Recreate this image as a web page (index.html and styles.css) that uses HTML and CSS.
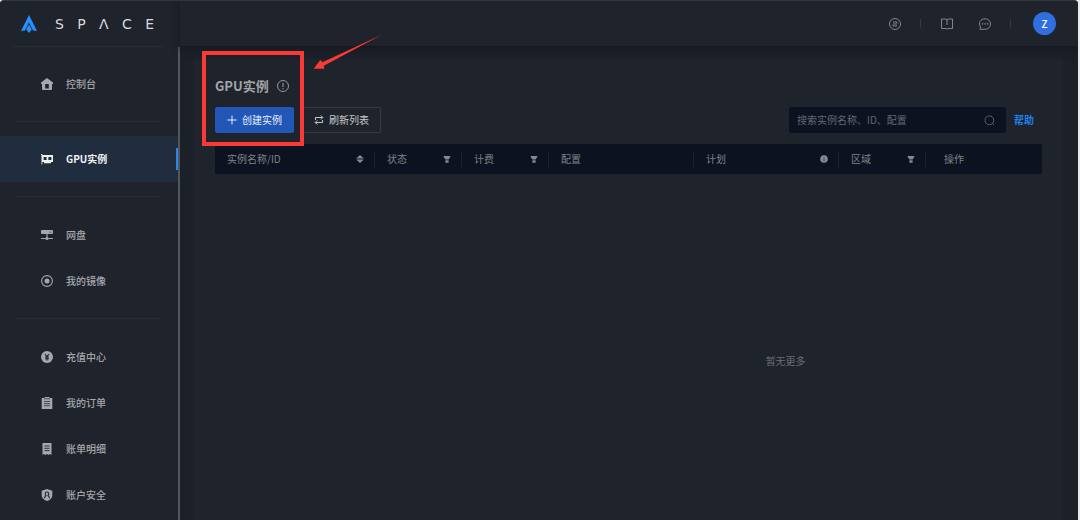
FILE: index.html
```html
<!DOCTYPE html>
<html lang="zh-CN">
<head>
<meta charset="utf-8">
<title>GPU实例</title>
<link rel="stylesheet" href="styles.css">
</head>
<body>
<div class="app">
  <aside class="sidebar">
    <a class="brand" href="#">
      <svg class="brand-mark" viewBox="0 0 16 18"><path fill="#2590ff" d="M8 0 16 16 12 15.500 8 7.500 4 15.500 0 16Z"/><path fill="#2590ff" d="M8 9.500 10.800 14.500 8 18 5.200 14.500Z"/></svg>
      <span class="wordmark"><span>S</span><span>P</span><span>Λ</span><span>C</span><span>E</span></span>
    </a>
    <nav class="nav">
      <div class="nav-group">
        <a class="nav-item" href="#"><svg class="icon" viewBox="0 0 12 12"><path fill="currentColor" fill-rule="evenodd" d="M6 0 12 4.500V6H11V11Q11 12 10 12H2Q1 12 1 11V6H0V4.500ZM4.200 6V10.500H7.800V6Z"/></svg>控制台</a>
      </div>
      <div class="nav-group">
        <a class="nav-item active" href="#" aria-current="page"><svg class="icon" viewBox="0 0 12 12"><path fill="currentColor" fill-rule="evenodd" d="M0 1H1.300V2H12V9H10V10.300H3V9H1.300V11.500H.5V2H0ZM2.600 4V7H5.600V4ZM7.400 4V7H10.400V4Z"/></svg>GPU实例</a>
      </div>
      <div class="nav-group">
        <a class="nav-item" href="#"><svg class="icon" viewBox="0 0 12 12"><rect y="1" width="12" height="4" rx="1" fill="currentColor"/><path stroke="currentColor" stroke-width="1.100" d="M6 5V9M0 9.500H12"/><circle cx="6" cy="9.500" r="1.500" fill="currentColor"/><path stroke="#1f232b" stroke-width=".6" d="M8.500 3.200H10.500"/></svg>网盘</a>
        <a class="nav-item" href="#"><svg class="icon" viewBox="0 0 12 12"><circle cx="6" cy="6" r="5.400" fill="none" stroke="currentColor" stroke-width="1.100"/><circle cx="6" cy="6" r="2.500" fill="currentColor"/></svg>我的镜像</a>
      </div>
      <div class="nav-group">
        <a class="nav-item" href="#"><svg class="icon" viewBox="0 0 12 12"><circle cx="6" cy="6" r="6" fill="currentColor"/><path fill="none" stroke="#1f232b" stroke-width="1.100" d="M4 3 6 5.500 8 3M6 5.500V9.500M4 6H8M4 7.700H8"/></svg>充值中心</a>
        <a class="nav-item" href="#"><svg class="icon" viewBox="0 0 12 12"><path fill="currentColor" d="M.7 1H3.500V0H8.500V1H11.300V12H.7Z"/><path stroke="#1f232b" stroke-width=".7" d="M3 1.800H9M3 4.500H9M3 6.600H9M3 8.700H9"/></svg>我的订单</a>
        <a class="nav-item" href="#"><svg class="icon" viewBox="0 0 12 12"><path fill="currentColor" d="M1.500 0H10.500V12L9 11 7.500 12 6 11 4.500 12 3 11 1.500 12Z"/><path stroke="#1f232b" stroke-width=".9" d="M3.500 3H8.500M3.500 5.300H8.500M3.500 7.600H8.500"/></svg>账单明细</a>
        <a class="nav-item" href="#"><svg class="icon" viewBox="0 0 12 12"><path fill="currentColor" d="M6 0 11.300 1.800V7Q10.500 10.500 6 12 1.500 10.500.7 7V1.800Z"/><path fill="none" stroke="#1f232b" stroke-width="1.100" d="M3.500 9.200Q3.600 7.600 5 6.600 4.300 5.900 4.300 4.700 4.400 3 6 3T7.700 4.700Q7.700 5.900 7 6.600 8.400 7.600 8.500 9.200"/></svg>账户安全</a>
      </div>
    </nav>
  </aside>
  <div class="main">
    <header class="topbar">
      <button class="tool" aria-label="切换"><svg class="icon" viewBox="0 0 12 12"><g fill="none" stroke="currentColor" stroke-width=".9"><circle cx="6" cy="6" r="5.500"/><path d="M5 3V8.500L3.200 6.700M7 9V3.500L8.800 5.300"/></g></svg></button>
      <span class="bar"></span>
      <button class="tool" aria-label="文档"><svg class="icon" viewBox="0 0 12 12"><path fill="none" stroke="currentColor" stroke-width=".9" d="M.5 1H5L6 2 7 1H11.500V10.500H7L6 11.300 5 10.500H.5ZM6 2V7"/></svg></button>
      <button class="tool" aria-label="消息"><svg class="icon" viewBox="0 0 12 12"><path fill="none" stroke="currentColor" stroke-width=".9" d="M1 11.300 1.500 8.800C-1 5 1.500.8 6 .8 9.500.8 11.500 3.300 11.500 6S9.500 11.300 6 11.300Z"/><path fill="currentColor" d="M2.900 5.300H4.200V6.600H2.900ZM5.400 5.300H6.700V6.600H5.400ZM7.900 5.300H9.200V6.600H7.900Z"/></svg></button>
      <span class="bar"></span>
      <button class="avatar">Z</button>
    </header>
    <main class="panel">
      <h1 class="title">GPU实例 <svg class="icon" viewBox="0 0 12 12"><circle cx="6" cy="6" r="5.500" fill="none" stroke="currentColor" stroke-width=".9"/><path stroke="currentColor" d="M6 3V7M6 8V9.200"/></svg></h1>
      <div class="actions">
        <button class="btn primary"><svg class="btn-icon" viewBox="0 0 10 10"><path stroke="currentColor" d="M5 .5V9.500M.5 5H9.500"/></svg>创建实例</button>
        <button class="btn"><svg class="btn-icon" viewBox="0 0 10 10"><path fill="none" stroke="currentColor" d="M1.500 5V2.500H8.500M6.800.5 8.800 2.500 6.800 4.500M8.500 5V7.500H1.500M3.200 5.500 1.200 7.500 3.200 9.500"/></svg>刷新列表</button>
        <label class="search">
          <input type="text" placeholder="搜索实例名称、ID、配置" aria-label="搜索实例">
          <svg class="search-icon" viewBox="0 0 12 12"><path fill="none" stroke="currentColor" stroke-width=".9" d="M9.200 9.200 11 11"/><circle cx="5.800" cy="5.800" r="4.800" fill="none" stroke="currentColor" stroke-width=".9"/></svg>
        </label>
        <a class="help" href="#">帮助</a>
      </div>
      <table class="grid">
        <colgroup><col class="c-name"><col class="c-small"><col class="c-small"><col class="c-wide"><col class="c-wide"><col class="c-small"><col></colgroup>
        <thead>
          <tr>
            <th><div class="cell">实例名称/ID<svg class="mini" viewBox="0 0 8 8"><path fill="currentColor" d="M4 0 7.800 3.500H.2ZM4 8 .2 4.500H7.800Z"/></svg></div></th>
            <th><div class="cell">状态<svg class="mini" viewBox="0 0 8 8"><path fill="currentColor" d="M.7 1H7.300V2L5.600 4.600H2.400L.7 2ZM2.400 5.200H5.600V7.700H2.400Z"/></svg></div></th>
            <th><div class="cell">计费<svg class="mini" viewBox="0 0 8 8"><path fill="currentColor" d="M.7 1H7.300V2L5.600 4.600H2.400L.7 2ZM2.400 5.200H5.600V7.700H2.400Z"/></svg></div></th>
            <th><div class="cell">配置</div></th>
            <th><div class="cell">计划<svg class="mini" viewBox="0 0 8 8"><circle cx="4" cy="4" r="3.800" fill="currentColor"/><path stroke="#0c121f" stroke-width=".7" d="M4 2V2.800M4 3.600V6"/></svg></div></th>
            <th><div class="cell">区域<svg class="mini" viewBox="0 0 8 8"><path fill="currentColor" d="M.7 1H7.300V2L5.600 4.600H2.400L.7 2ZM2.400 5.200H5.600V7.700H2.400Z"/></svg></div></th>
            <th><div class="cell last">操作</div></th>
          </tr>
        </thead>
      </table>
      <div class="empty-scroll"><p class="empty">暂无更多</p></div>
    </main>
  </div>
  <div class="callout"></div>
  <svg class="arrow" viewBox="0 0 70 38"><path fill="#fb3a38" d="M.7 34.700 7.300 26 9.500 28.300 69.300.4 10.800 31.800 11.500 34.700Z"/></svg>
</div>
</body>
</html>
```
FILE: styles.css
```css
* { box-sizing: border-box; }
body {
  margin: 0;
  background: #e9eaeb;
  color: #a5a7ab;
  font: 10px/16px "Noto Sans CJK SC", sans-serif;
}
a { color: inherit; text-decoration: none; }
button { font: inherit; color: inherit; border: 0; padding: 0; background: none; }
svg { display: block; flex: none; }
.icon { width: 12px; height: 12px; }

.app {
  position: relative;
  display: flex;
  height: 100vh;
  margin-right: 2px;
  overflow: hidden;
  border-top: 1px solid #32363d;
  border-radius: 4px 4px 0 0;
  background: #1c2028;
}
.sidebar {
  display: flex;
  flex-direction: column;
  flex: 0 0 180px;
  background: #1f232b;
}
.brand {
  display: flex;
  align-items: center;
  gap: 18px;
  height: 46px;
  margin: 0 16px 0 12px;
  padding-left: 9px;
  border-bottom: 1px solid #272d38;
}
.brand-mark { width: 16px; height: 18px; }
.wordmark {
  display: flex;
  justify-content: space-between;
  width: 99px;
  color: #d9dadc;
  font: 14px/18px "DejaVu Sans", sans-serif;
}
.nav { flex: 1; border-right: 2px solid #52565d; }
.nav-group { padding-top: 15px; }
.nav-group:nth-child(-n+2) { padding-top: 14px; }
.nav-group:not(:last-child)::after {
  content: "";
  display: block;
  height: 1px;
  margin: 14px 18px 0 15px;
  background: #272d38;
}
.nav-item {
  display: flex;
  align-items: center;
  gap: 13px;
  height: 46px;
  padding-left: 41px;
  font-weight: 500;
}
.nav-item.active {
  position: relative;
  background: #202d3f;
  color: #f0f1f3;
  font-weight: 700;
}
.nav-item.active::after {
  content: "";
  position: absolute;
  right: 0;
  top: 12px;
  width: 2px;
  height: 22px;
  background: #2c86e8;
}

.main { display: flex; flex-direction: column; flex: 1; min-width: 0; }
.topbar {
  display: flex;
  align-items: center;
  justify-content: flex-end;
  flex: 0 0 45px;
  padding-right: 22px;
  background: #1f232b;
  box-shadow: 0 2px 8px #14171d;
  color: #8d9096;
}
.bar { width: 1px; height: 9px; margin: 0 20px 0 19px; background: #353941; }
.tool + .tool { margin-left: 26px; }
.avatar {
  width: 23px;
  height: 23px;
  margin-left: 2px;
  border-radius: 50%;
  background: #2f6fe0;
  color: #fff;
  font-weight: 500;
}
.panel { flex: 1; margin: 13px 16px 0 14px; padding: 17px 20px 0 21px; background: #1f232b; }
.title {
  display: flex;
  align-items: center;
  gap: 8px;
  margin: 0 0 11px;
  color: #a3a5a9;
  font-size: 13px;
  line-height: 20px;
}
.actions { display: flex; align-items: center; gap: 8px; }
.btn {
  display: flex;
  align-items: center;
  justify-content: center;
  gap: 5px;
  width: 79px;
  height: 26px;
  border: 1px solid #363a42;
  border-radius: 2px;
  color: #c6c8cb;
}
.btn.primary { border-color: #2257b8; background: #2257b8; color: #e9eefa; }
.btn-icon { width: 10px; height: 10px; }
.search {
  display: flex;
  align-items: center;
  width: 217px;
  height: 26px;
  margin-left: auto;
  padding: 0 11px 0 8px;
  border-radius: 3px;
  background: #0c121f;
  color: #6b6f77;
}
.search input {
  flex: 1;
  min-width: 0;
  padding: 0;
  border: 0;
  outline: 0;
  background: none;
  color: #c6c8cb;
  font: inherit;
}
.search input::placeholder { color: #646870; }
.search-icon { width: 11px; height: 11px; }
.help { margin-right: 8px; color: #1f80e8; font-weight: 700; }

.grid {
  width: 100%;
  margin-top: 11px;
  border-collapse: collapse;
  table-layout: fixed;
  background: #0c121f;
}
.c-name { width: 160px; }
.c-small { width: 87px; }
.c-wide { width: 145px; }
.grid th { height: 30px; padding: 0; color: #7f838a; font-weight: 400; text-align: left; }
.cell {
  display: flex;
  align-items: center;
  justify-content: space-between;
  padding: 0 10px 0 12px;
  border-right: 1px solid #1b212d;
}
.cell.last { padding-left: 18px; border: 0; }
.mini { width: 8px; height: 8px; color: #858990; }
.empty-scroll { overflow: hidden; }
.empty { width: 138%; margin: 0; padding-top: 179px; color: #686c73; text-align: center; }

.callout {
  position: absolute;
  left: 202px;
  top: 50px;
  width: 102px;
  height: 95px;
  border: 4px solid #fb3a38;
}
.arrow { position: absolute; left: 313px; top: 33px; width: 70px; height: 38px; }
```
